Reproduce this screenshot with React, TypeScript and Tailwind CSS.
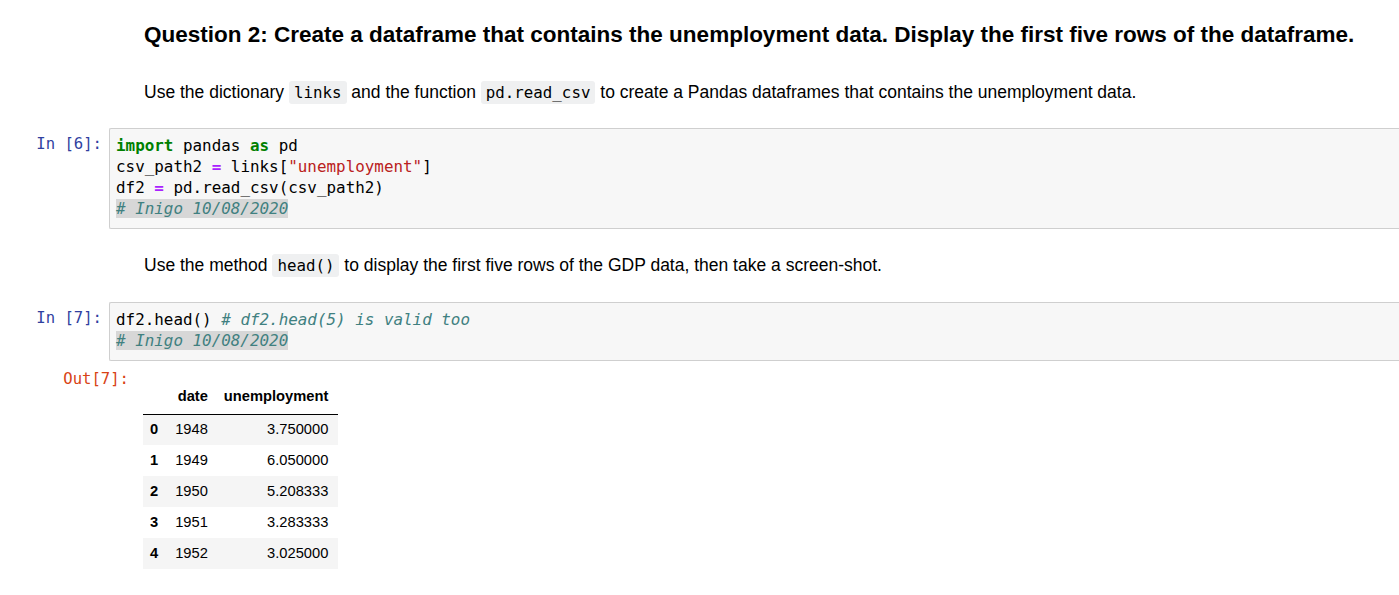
import React from "react";

const mono = { fontFamily: '"DejaVu Sans Mono", "Liberation Mono", monospace' };

function Prompt({ label, out }: { label: string; out?: boolean }) {
  return (
    <div
      className={
        "shrink-0 text-right text-[15.6px] leading-[21px] " +
        (out ? "w-[131px] pr-[2px] text-[#d84315]" : "w-[109px] pr-[7px] text-[#303f9f]")
      }
      style={mono}
    >
      {label}
    </div>
  );
}

function Code({ children }: { children: React.ReactNode }) {
  return (
    <code className="rounded-[3px] bg-[#eff0f1] px-[5px] py-[2px] text-[15.8px]" style={mono}>
      {children}
    </code>
  );
}

const rows = [
  ["0", "1948", "3.750000"],
  ["1", "1949", "6.050000"],
  ["2", "1950", "5.208333"],
  ["3", "1951", "3.283333"],
  ["4", "1952", "3.025000"],
];

export default function App() {
  return (
    <div className="min-h-[595px] bg-white text-black" style={{ fontFamily: '"Liberation Sans", Arial, sans-serif' }}>
      <div className="pl-[144px] pt-[22px]">
        <h2 className="text-[22.5px] font-bold leading-[26px]">
          Question 2: Create a dataframe that contains the unemployment data. Display the first five rows of the dataframe.
        </h2>
        <p className="mt-[33px] text-[17.5px] leading-[22px]">
          Use the dictionary <Code>links</Code> and the function <Code>pd.read_csv</Code> to create a Pandas dataframes that contains the unemployment data.
        </p>
      </div>

      <div className="mt-[24px] flex">
        <div className="pt-[6px]">
          <Prompt label="In [6]:" />
        </div>
        <div
          className="h-[101px] flex-1 rounded-l-[2px] border border-r-0 border-[#cfcfcf] bg-[#f7f7f7] pl-[6px] pt-[6px] text-[15.9px] leading-[21px]"
          style={mono}
        >
          <div>
            <span className="font-bold text-[#008000]">import</span> pandas <span className="font-bold text-[#008000]">as</span> pd
          </div>
          <div>
            csv_path2 <span className="font-bold text-[#aa22ff]">=</span> links[<span className="text-[#ba2121]">"unemployment"</span>]
          </div>
          <div>
            df2 <span className="font-bold text-[#aa22ff]">=</span> pd.read_csv(csv_path2)
          </div>
          <div>
            <span className="bg-[#d7d7d7] italic text-[#408080]"># Inigo 10/08/2020</span>
          </div>
        </div>
      </div>

      <p className="mt-[25px] pl-[144px] text-[17.5px] leading-[22px]">
        Use the method <Code>head()</Code> to display the first five rows of the GDP data, then take a screen-shot.
      </p>

      <div className="mt-[25px] flex">
        <div className="pt-[6px]">
          <Prompt label="In [7]:" />
        </div>
        <div
          className="h-[59px] flex-1 rounded-l-[2px] border border-r-0 border-[#cfcfcf] bg-[#f7f7f7] pl-[6px] pt-[6px] text-[15.9px] leading-[21px]"
          style={mono}
        >
          <div>
            df2.head() <span className="italic text-[#408080]"># df2.head(5) is valid too</span>
          </div>
          <div>
            <span className="bg-[#d7d7d7] italic text-[#408080]"># Inigo 10/08/2020</span>
          </div>
        </div>
      </div>

      <div className="mt-[8px] flex">
        <Prompt label="Out[7]:" out />
        <table className="ml-[12px] mt-[11px] border-collapse text-[14.7px] leading-[15px]">
          <thead>
            <tr className="h-[34px] border-b border-black">
              <th className="w-[24px]"></th>
              <th className="px-[8px] text-right font-bold">date</th>
              <th className="pl-[8px] pr-[10px] text-right font-bold">unemployment</th>
            </tr>
          </thead>
          <tbody>
            {rows.map((r, i) => (
              <tr key={r[0]} className={"h-[31px] " + (i % 2 === 0 ? "bg-[#f5f5f5]" : "bg-white")}>
                <td className="pl-[7px] pr-[9px] font-bold">{r[0]}</td>
                <td className="px-[8px] text-right">{r[1]}</td>
                <td className="pl-[8px] pr-[10px] text-right">{r[2]}</td>
              </tr>
            ))}
          </tbody>
        </table>
      </div>
    </div>
  );
}
